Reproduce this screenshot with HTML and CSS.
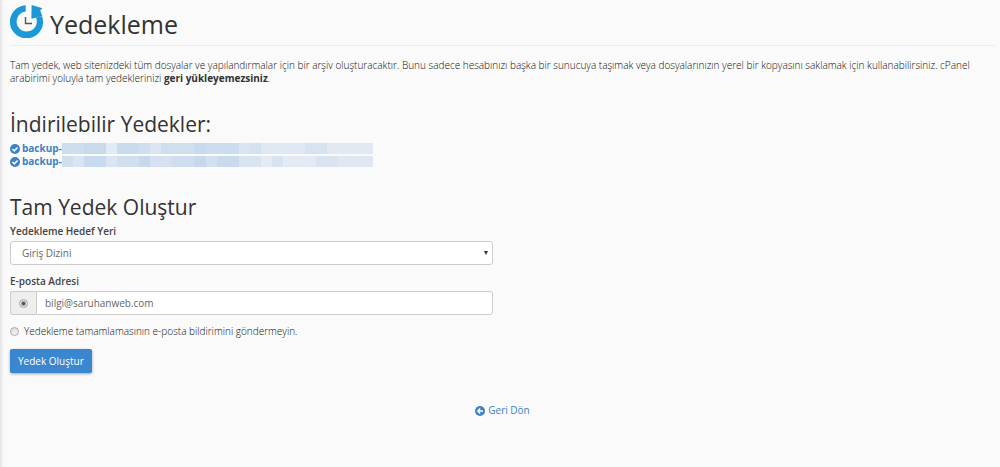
FILE: index.html
```html
<!DOCTYPE html>
<html lang="tr">

<head>
    <meta charset="UTF-8">
    <meta name="viewport" content="width=device-width, initial-scale=1.0">
    <title>Yedekleme</title>
    <link rel="stylesheet" href="styles.css">
</head>

<body>
    <main class="content">
        <h1 class="page-header">
            <svg class="page-icon" viewBox="0 0 34 34" aria-hidden="true">
                <path d="M15.7 1.2V7.4A10.1 10.1 0 1 0 26 13.5L32.2 12.4A16.6 16.6 0 1 1 15.7 1.2Z" fill="#1c98d6" />
                <path d="M21.6 1L32.4 4.2L30.2 6.4L32.4 12.2L21.4 14.8Z" fill="#1c98d6" />
                <path d="M15.5 13V19.5H22" fill="none" stroke="#555" stroke-width="1.4" />
            </svg>
            <span>Yedekleme</span>
        </h1>

        <p class="description">Tam yedek, web sitenizdeki tüm dosyalar ve yapılandırmalar için bir arşiv oluşturacaktır. Bunu sadece hesabınızı başka bir sunucuya taşımak veya dosyalarınızın yerel bir kopyasını saklamak için kullanabilirsiniz. cPanel arabirimi yoluyla tam yedeklerinizi <strong>geri yükleyemezsiniz</strong>.</p>

        <!-- Backups -->
        <section class="backups">
            <h2>İndirilebilir Yedekler:</h2>
            <ul class="backup-list">
                <li>
                    <svg class="icon" viewBox="0 0 10 10" aria-hidden="true">
                        <circle cx="5" cy="5" r="5" fill="#3c82c4" />
                        <path d="M2.5 5L4.3 6.8L7.6 3.5" fill="none" stroke="#fff" stroke-width="1.6" />
                    </svg>
                    <a href="#">backup-</a>
                    <span class="mask mask-first"></span>
                </li>
                <li>
                    <svg class="icon" viewBox="0 0 10 10" aria-hidden="true">
                        <circle cx="5" cy="5" r="5" fill="#3c82c4" />
                        <path d="M2.5 5L4.3 6.8L7.6 3.5" fill="none" stroke="#fff" stroke-width="1.6" />
                    </svg>
                    <a href="#">backup-</a>
                    <span class="mask mask-second"></span>
                </li>
            </ul>
        </section>

        <!-- Full backup form -->
        <section>
            <h2>Tam Yedek Oluştur</h2>
            <form class="backup-form">
                <label class="field-label" for="dest">Yedekleme Hedef Yeri</label>
                <div class="select-wrap">
                    <select class="form-control" id="dest">
                        <option>Giriş Dizini</option>
                    </select>
                </div>

                <label class="field-label" for="email">E-posta Adresi</label>
                <div class="input-group">
                    <span class="input-addon">
                        <input class="radio" type="radio" name="notify" aria-label="E-posta Adresi" checked>
                    </span>
                    <input class="form-control" type="text" id="email" value="bilgi@saruhanweb.com">
                </div>

                <div class="radio-row">
                    <input class="radio" type="radio" name="notify" id="no-email">
                    <label for="no-email">Yedekleme tamamlamasının e-posta bildirimini göndermeyin.</label>
                </div>

                <button class="btn" type="button">Yedek Oluştur</button>
            </form>
        </section>

        <a class="go-back" href="#">
            <svg class="icon" viewBox="0 0 10 10" aria-hidden="true">
                <circle cx="5" cy="5" r="5" fill="#3c82c4" />
                <path d="M8 5H3M5.2 2.5L2.7 5L5.2 7.5" fill="none" stroke="#fff" stroke-width="1.4" />
            </svg>
            Geri Dön
        </a>
    </main>
</body>

</html>
```
FILE: styles.css
```css
* {
    box-sizing: border-box;
}

body {
    margin: 0;
    min-height: 100vh;
    background: linear-gradient(90deg, #e4e4e6, #fafafa 4px);
    color: #555;
    font-family: "Open Sans", "Noto Sans", sans-serif;
    font-size: 10px;
    line-height: 13px;
}

.content {
    padding: 4px 5px 0 10px;
}

h1,
h2 {
    color: #333;
    font-weight: 400;
}

.page-header {
    display: flex;
    align-items: flex-start;
    gap: 6px;
    margin: 0 0 13px;
    border-bottom: 1px solid #eee;
    font-size: 25px;
    line-height: 41px;
}

.page-icon {
    width: 34px;
    height: 34px;
}

.description {
    margin: 0 0 26px;
    color: #111;
    font-weight: 300;
}

.description strong {
    color: #333;
    font-weight: 700;
}

h2 {
    margin: 0 0 4px;
    font-size: 21px;
    line-height: 27px;
}

a {
    color: #3c82c4;
    text-decoration: none;
}

.icon {
    flex: none;
    width: 10px;
    height: 10px;
}
/* Backup list */

.backup-list {
    margin: 0 0 26px;
    padding: 0;
    list-style: none;
}

.backup-list li {
    display: flex;
    align-items: center;
    height: 13px;
}

.backup-list a {
    margin-left: 2px;
    font-weight: 700;
}
/* Hidden part of the file name */

.mask {
    width: 311px;
    height: 11px;
}

.mask-first {
    background: linear-gradient(90deg, #cfdeed 22px, #c9daeb 22px 44px, #e2eaf4 44px 55px, #cadbed 55px 77px, #d0dfee 77px 88px, #dce6f2 88px 99px, #d0dfee 99px 132px, #c8daed 132px 144px, #cddcee 144px 177px, #dbe5f1 177px 188px, #d5e1f0 188px 199px, #e0e8f3 199px 243px, #d7e3f1 243px 265px, #e3e9f3 265px);
}

.mask-second {
    background: linear-gradient(90deg, #d0dfee 11px, #dbe5f1 11px 22px, #c8daed 22px 44px, #dbe5f1 44px 55px, #d0dfee 55px 77px, #c5d8ec 77px 88px, #d5e1f0 88px 110px, #cfdeee 110px 132px, #c5d8ec 132px 144px, #d3e0f0 144px 155px, #c9daed 155px 177px, #d9e4f1 177px 199px, #e5ebf4 199px 210px, #d7e3f1 210px 221px, #e3eaf4 221px 254px, #dae4f1 254px 276px, #e0e7f2 276px);
}
/* Form */

.backup-form {
    width: 49%;
}

.field-label {
    display: block;
    margin-bottom: 3px;
    color: #444;
    font-weight: 600;
}

.form-control {
    width: 100%;
    height: 24px;
    padding: 0 8px;
    border: 1px solid #ccc;
    border-radius: 3px;
    background: #fff;
    color: #666;
    font: inherit;
}

.select-wrap {
    display: grid;
    align-items: center;
    margin-bottom: 10px;
}

.select-wrap .form-control {
    grid-area: 1 / 1;
    padding: 0 11px;
    appearance: none;
}

.select-wrap::after {
    grid-area: 1 / 1;
    justify-self: end;
    margin-right: 5px;
    border: 2px solid transparent;
    border-top: 4px solid #333;
    border-bottom: 0;
    content: "";
    pointer-events: none;
}

.input-group {
    display: flex;
    margin-bottom: 10px;
}

.input-addon {
    display: flex;
    align-items: center;
    justify-content: center;
    flex: none;
    width: 26px;
    border: 1px solid #ccc;
    border-right: 0;
    border-radius: 3px 0 0 3px;
    background: #eee;
}

.input-group .form-control {
    flex: 1;
    border-radius: 0 3px 3px 0;
}

.radio {
    flex: none;
    width: 9px;
    height: 9px;
    margin: 0;
    border: 1px solid #aaa;
    border-radius: 50%;
    background: linear-gradient(#dedede, #f4f4f4);
    appearance: none;
}

.radio:checked {
    background: radial-gradient(circle, #555 1px, #e4e4e4 3px);
}

.radio-row {
    display: flex;
    align-items: center;
    gap: 5px;
    margin-bottom: 11px;
    color: #111;
    font-weight: 300;
}

.btn {
    display: block;
    height: 24px;
    padding: 0 8px;
    border: 0;
    border-radius: 2px;
    background: #3a87cf;
    box-shadow: 0 1px 3px rgba(0, 0, 0, 0.35);
    color: #fff;
    font: inherit;
}

.go-back {
    display: flex;
    align-items: center;
    justify-content: center;
    gap: 3px;
    margin-top: 31px;
}
```
